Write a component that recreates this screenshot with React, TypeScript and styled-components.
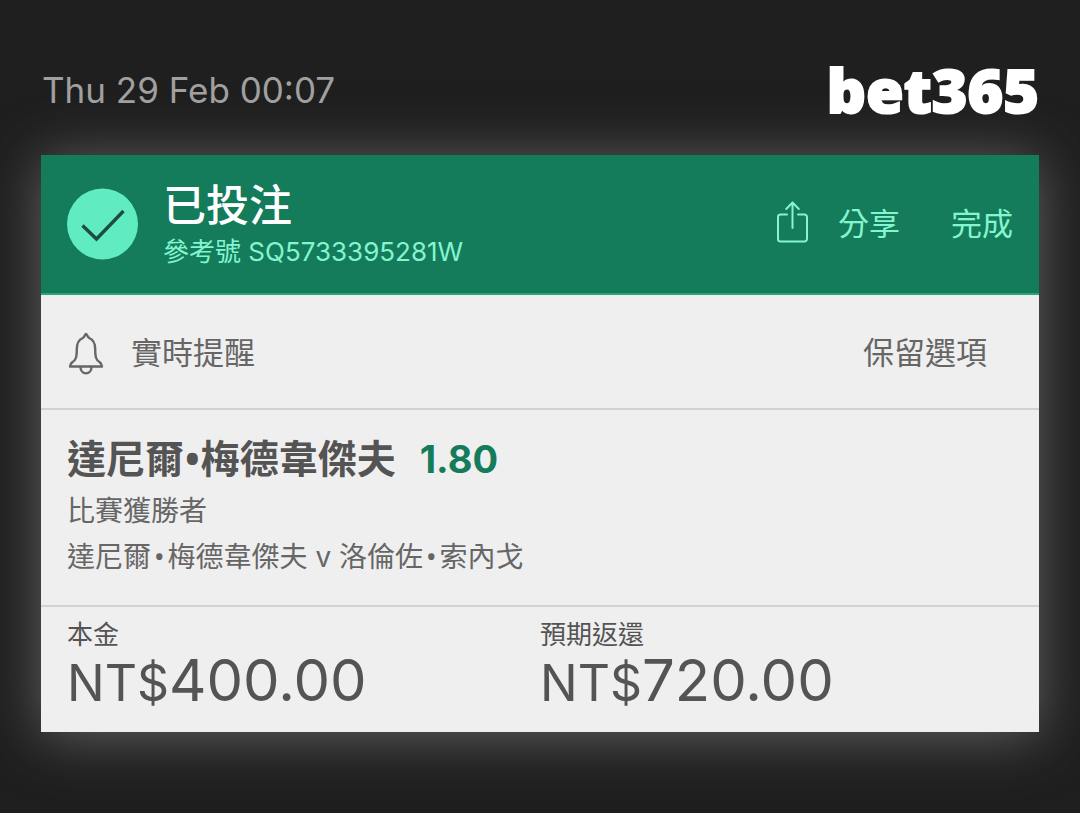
import React from "react";
import styled, { createGlobalStyle } from "styled-components";

const GlobalStyle = createGlobalStyle`
  *, *::before, *::after { box-sizing: border-box; }
  body {
    margin: 0;
    background: #1f1f1f;
    font-family: Inter, "Noto Sans CJK TC", sans-serif;
  }
  h1, h2, p, dl, dt, dd { margin: 0; font-weight: 400; }
`;

const Page = styled.main`
  padding: 62px 41px 80px;
`;

const TopBar = styled.header`
  display: flex;
  justify-content: space-between;
  align-items: center;
  height: 56px;
  margin-bottom: 37px;
`;

const Timestamp = styled.time`
  padding-left: 1px;
  color: #a0a0a0;
  font-size: 35px;
  line-height: 56px;
`;

const Logo = styled.span`
  color: #fff;
  font-family: "Open Sans", "Noto Sans", sans-serif;
  font-size: 61px;
  line-height: 56px;
  font-weight: 800;
  -webkit-text-stroke: 2px #fff;
`;

const Card = styled.article`
  background: #efefef;
  box-shadow: 0 4px 52px #626262;
`;

const Banner = styled.header`
  display: flex;
  align-items: center;
  height: 140px;
  padding: 0 26px;
  background: #147b5b;
  border-bottom: 2px solid #26a57b;
`;

const Tick = styled.svg`
  width: 72px;
  height: 72px;
  margin-right: 24px;
`;

const BannerText = styled.div`
  flex: 1;
  padding-top: 6px;
`;

const Title = styled.h1`
  color: #fff;
  font-size: 43px;
  line-height: 50px;
  && { font-weight: 500; }
`;

const Reference = styled.p`
  color: #84f5cf;
  font-size: 26px;
  line-height: 44px;
`;

const BannerButton = styled.button`
  display: flex;
  align-items: center;
  gap: 28px;
  padding: 0;
  border: 0;
  background: none;
  color: #84f5cf;
  font: inherit;
  font-size: 31px;
  line-height: 44px;
  margin-left: 51px;
  cursor: pointer;
`;

const AlertRow = styled.section`
  display: flex;
  justify-content: space-between;
  align-items: center;
  height: 115px;
  padding: 2px 52px 0 26px;
  border-bottom: 2px solid #d2d2d2;
`;

const RowButton = styled.button`
  display: flex;
  align-items: center;
  gap: 26px;
  padding: 0;
  border: 0;
  background: none;
  color: #666;
  font: inherit;
  font-size: 31px;
  line-height: 44px;
  cursor: pointer;
`;

const Selection = styled.section`
  padding: 20px 26px 25px;
  border-bottom: 2px solid #d2d2d2;
`;

const SelectionHead = styled.div`
  display: flex;
  align-items: center;
  gap: 24px;
  line-height: 58px;
`;

const Player = styled.h2`
  color: #545454;
  font-size: 39px;
  && { font-weight: 700; }
`;

const Dot = styled.span<{ $space: number }>`
  padding: 0 ${(p) => p.$space}px;
  font-family: "Noto Sans", sans-serif;
  line-height: 1;
`;

const Odds = styled.strong`
  color: #147b5b;
  font-size: 38px;
  font-weight: 700;
`;

const Detail = styled.p`
  color: #666;
  font-size: 28px;
  line-height: 46px;
`;

const Totals = styled.dl`
  display: grid;
  grid-template-columns: 1fr 1fr;
  padding: 8px 26px 24px;
`;

const TotalGroup = styled.div`
  min-width: 0;
`;

const TotalLabel = styled.dt`
  color: #545454;
  font-size: 26px;
  line-height: 40px;
`;

const TotalValue = styled.dd`
  color: #545454;
  font-size: 58px;
  line-height: 50px;
`;

const Currency = styled.span`
  font-size: 50px;
`;

function TickIcon() {
  return (
    <Tick viewBox="0 0 72 72" aria-hidden="true">
      <circle cx="35.500" cy="36" r="35.5" fill="#60ecc0" />
      <path d="M15.500 37.500 29.500 51 56.500 23" fill="none" stroke="#1e4d40" strokeWidth="3.4" />
    </Tick>
  );
}

function ShareIcon() {
  return (
    <svg width="34" height="48" viewBox="0 0 34 48" fill="none" stroke="currentColor" strokeWidth="2" strokeLinecap="round" strokeLinejoin="round" aria-hidden="true">
      <path d="M11 14.500H4.500a2.500 2.500 0 0 0-2.500 2.500V39a2.500 2.500 0 0 0 2.500 2.500H28.500a2.500 2.500 0 0 0 2.500-2.500V17a2.500 2.500 0 0 0-2.500-2.500H22" />
      <path d="M16.500 28V2.500M10.200 9l6.300-6.500L22.800 9" />
    </svg>
  );
}

function BellIcon() {
  return (
    <svg width="38" height="44" viewBox="0 0 38 44" fill="none" stroke="currentColor" strokeWidth="2.400" strokeLinejoin="round" aria-hidden="true">
      <path d="M19 3C18 3 17.600 6 15.800 7C11 9 9.800 13 9.800 18C9.800 26 9 29 5.500 31C3.500 32.500 3 33.500 3 35.500H35C35 33.500 34.500 32.500 32.500 31C29 29 28.200 26 28.200 18C28.200 13 27 9 22.200 7C20.400 6 20 3 19 3Z" />
      <path d="M13.500 36C13.500 44.500 24.500 44.500 24.500 36" />
    </svg>
  );
}

interface TotalProps {
  label: string;
  amount: string;
}

function Total({ label, amount }: TotalProps) {
  return (
    <TotalGroup>
      <TotalLabel>{label}</TotalLabel>
      <TotalValue>
        <Currency>NT$</Currency>
        {amount}
      </TotalValue>
    </TotalGroup>
  );
}

export default function App() {
  return (
    <>
      <GlobalStyle />
      <Page>
        <TopBar>
          <Timestamp>Thu 29 Feb 00:07</Timestamp>
          <Logo>bet365</Logo>
        </TopBar>
        <Card>
          <Banner>
            <TickIcon />
            <BannerText>
              <Title>已投注</Title>
              <Reference>參考號 SQ5733395281W</Reference>
            </BannerText>
            <BannerButton type="button">
              <ShareIcon />
              分享
            </BannerButton>
            <BannerButton type="button">完成</BannerButton>
          </Banner>
          <AlertRow>
            <RowButton type="button">
              <BellIcon />
              實時提醒
            </RowButton>
            <RowButton type="button">保留選項</RowButton>
          </AlertRow>
          <Selection>
            <SelectionHead>
              <Player>達尼爾<Dot $space={1}>•</Dot>梅德韋傑夫</Player>
              <Odds>1.80</Odds>
            </SelectionHead>
            <Detail>比賽獲勝者</Detail>
            <Detail>
              達尼爾<Dot $space={3}>•</Dot>梅德韋傑夫 v 洛倫佐<Dot $space={3}>•</Dot>索內戈
            </Detail>
          </Selection>
          <Totals>
            <Total label="本金" amount="400.00" />
            <Total label="預期返還" amount="720.00" />
          </Totals>
        </Card>
      </Page>
    </>
  );
}
